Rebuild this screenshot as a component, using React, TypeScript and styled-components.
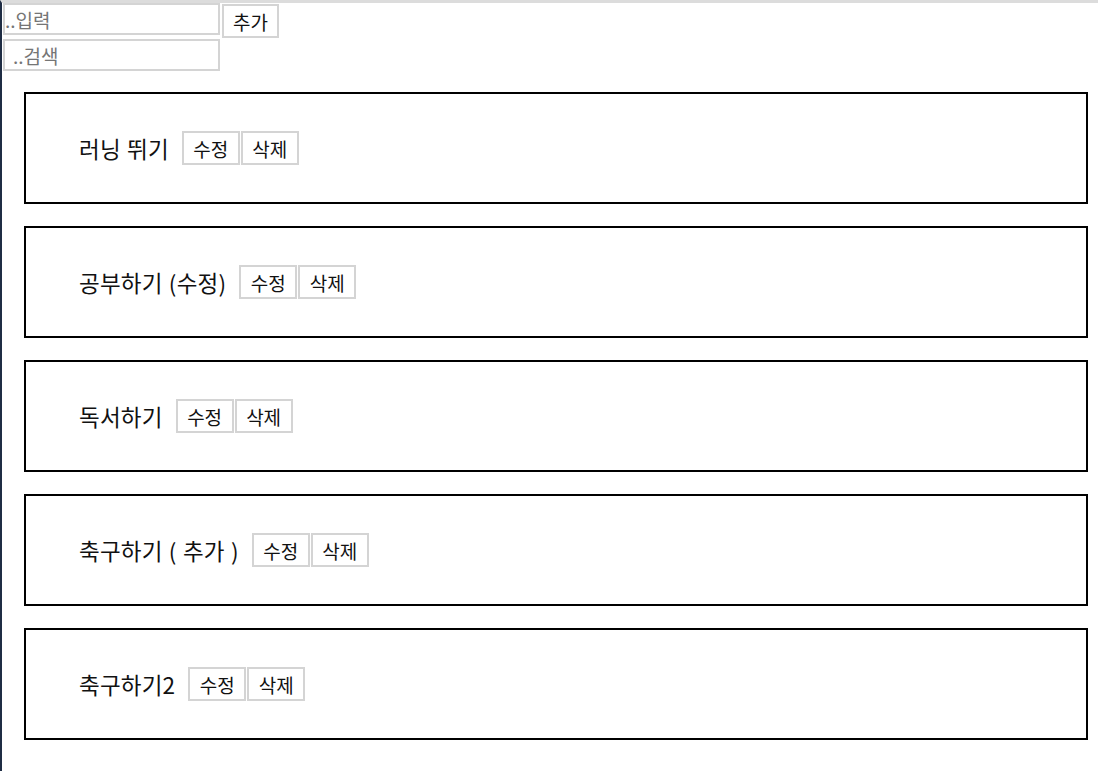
import React from "react";
import styled, { createGlobalStyle } from "styled-components";

const Global = createGlobalStyle`
  html, body { margin: 0; padding: 0; background: #fff; }
  body {
    font-family: "Noto Sans CJK KR", "Noto Sans", sans-serif;
    border-top: 3px solid #dcdcdc;
    border-left: 2px solid #1f2d44;
    min-height: 771px;
    box-sizing: border-box;
  }
`;

const Page = styled.div`
  padding: 0 10px 0 1px;
`;

const Row = styled.div`
  display: flex;
  align-items: flex-start;
  gap: 2px;
`;

const Input = styled.input<{ $pad?: number }>`
  box-sizing: border-box;
  width: 217px;
  height: 32px;
  border: 2px solid #d4d4d4;
  padding: 0 0 0 ${(p) => p.$pad ?? 0}px;
  font-family: "Noto Sans CJK KR", sans-serif;
  font-size: 19px;
  outline: none;
  &::placeholder { color: #757575; }
`;

const SearchInput = styled(Input)`
  margin-top: 1px;
  display: block;
`;

const Btn = styled.button`
  box-sizing: border-box;
  height: 34px;
  padding: 0;
  background: #fff;
  border: 2px solid #d4d4d4;
  font-family: "Noto Sans CJK KR", sans-serif;
  font-size: 19px;
  color: #111;
  cursor: pointer;
`;

const AddBtn = styled(Btn)`
  margin-top: 1px;
  width: 57px;
`;

const List = styled.div`
  margin: 21px 0 0 21px;
  display: flex;
  flex-direction: column;
  gap: 22px;
`;

const Card = styled.div`
  box-sizing: border-box;
  height: 112px;
  border: 2px solid #000;
  display: flex;
  align-items: center;
  padding-left: 53px;
`;

const Title = styled.span`
  font-size: 22.5px;
  word-spacing: 1px;
  letter-spacing: 0.2px;
  color: #111;
  margin-right: 13px;
`;

const ItemBtn = styled(Btn)`
  width: 58px;
  & + & { margin-left: 1px; }
`;

const items = ["러닝 뛰기", "공부하기 (수정)", "독서하기", "축구하기 ( 추가 )", "축구하기2"];

export default function App() {
  return (
    <>
      <Global />
      <Page>
        <Row>
          <Input placeholder="..입력" />
          <AddBtn>추가</AddBtn>
        </Row>
        <SearchInput $pad={8} placeholder="..검색" />
        <List>
          {items.map((t) => (
            <Card key={t}>
              <Title>{t}</Title>
              <ItemBtn>수정</ItemBtn>
              <ItemBtn>삭제</ItemBtn>
            </Card>
          ))}
        </List>
      </Page>
    </>
  );
}
